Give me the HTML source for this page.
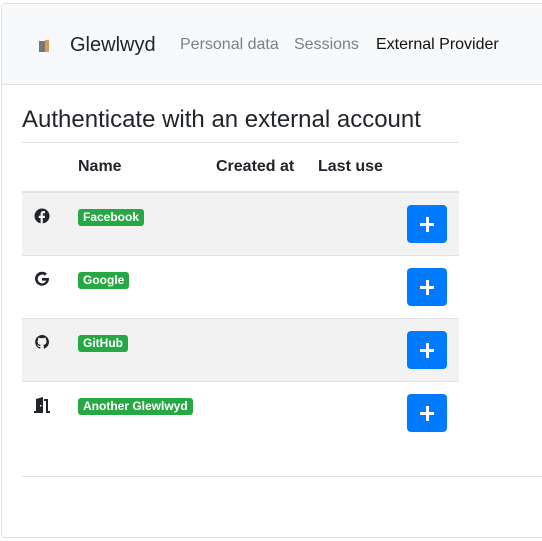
<!DOCTYPE html>
<html><head><style>
*{box-sizing:border-box;margin:0;padding:0}
body{width:542px;height:541px;background:#fff;font-family:"Liberation Sans",sans-serif;color:#212529;position:relative;overflow:hidden}
.frame{position:absolute;left:1px;top:3px;width:560px;height:535px;border:1px solid #dee2e6;border-radius:4px}
.nav{position:absolute;left:2px;top:4px;width:560px;height:81px;background:#f8f9fa;border-bottom:1px solid #dee2e6}
.abs{position:absolute;white-space:nowrap}
.brand{left:70px;top:34px;font-size:20px;color:#212529}
.nl{top:36px;font-size:16px;color:#7d7f82}
h1{position:absolute;left:22px;top:106px;font-size:24px;font-weight:400;white-space:nowrap}
.hl{position:absolute;left:22px;height:1px;background:#dee2e6}
.th{top:158px;font-size:16px;font-weight:bold}
.row{position:absolute;left:22px;width:437px;height:63px;border-bottom:1px solid #dee2e6}
.g{background:#f2f2f2}
.badge{position:absolute;left:56px;top:16px;height:17px;background:#28a745;color:#fff;font-size:12px;font-weight:bold;padding:2px 5px;border-radius:3px;line-height:13px}
.btn{position:absolute;left:385px;top:12px;width:40px;height:38px;background:#007bff;border-radius:4px}
.btn:before{content:"";position:absolute;left:13px;top:18px;width:14px;height:3px;background:#fff}
.btn:after{content:"";position:absolute;left:18.5px;top:12px;width:3px;height:15px;background:#fff}
.ic{position:absolute;left:12px;top:15px}
</style></head><body>
<div class="frame"></div>
<div class="nav"></div>
<div class="abs" style="left:39px;top:41px;width:6px;height:11px;background:#777"></div>
<div class="abs" style="left:45px;top:40px;width:4px;height:12px;background:#d4a050"></div>
<div class="abs brand">Glewlwyd</div>
<div class="abs nl" style="left:180px">Personal data</div>
<div class="abs nl" style="left:294px">Sessions</div>
<div class="abs nl" style="left:376px;color:#111">External Provider</div>
<h1>Authenticate with an external account</h1>
<div class="hl" style="top:142px;width:437px"></div>
<div class="abs th" style="left:78px">Name</div>
<div class="abs th" style="left:216px">Created at</div>
<div class="abs th" style="left:318px">Last use</div>
<div class="hl" style="top:191px;width:437px;height:2px"></div>
<div class="row g" style="top:193px"><svg class="ic" width="16" height="16" viewBox="0 0 16 16"><circle cx="8" cy="8" r="7.5" fill="#212529"/><path d="M8.8 16V10h2l.3-2.3H8.8V6.3c0-.6.2-1 1-1h1.3V3.2C10.6 3.1 10 3 9.4 3 7.8 3 6.6 4 6.6 5.8v1.9H4.7V10h1.9v6z" fill="#f2f2f2"/></svg><span class="badge">Facebook</span><div class="btn"></div></div>
<div class="row" style="top:256px"><svg class="ic" width="16" height="16" viewBox="0 0 16 16"><path d="M15 7H8v2.6h4.2A4.4 4.4 0 1 1 11 4.6l1.9-1.9A7 7 0 1 0 15 8z" fill="#212529"/></svg><span class="badge">Google</span><div class="btn"></div></div>
<div class="row g" style="top:319px"><svg class="ic" width="16" height="16" viewBox="0 0 16 16"><path d="M8 1a7 7 0 0 0-2.2 13.6c.4 0 .5-.2.5-.4v-1.3c-2 .4-2.4-.9-2.4-.9-.3-.8-.8-1-.8-1-.6-.4.1-.4.1-.4.7 0 1.1.7 1.1.7.6 1.1 1.7.8 2.1.6 0-.5.2-.8.4-1-1.5-.2-3.2-.8-3.2-3.5 0-.8.3-1.4.7-1.9 0-.2-.3-.9.1-1.9 0 0 .6-.2 1.9.7a6.6 6.6 0 0 1 3.5 0c1.3-.9 1.9-.7 1.9-.7.4 1 .1 1.7.1 1.9.4.5.7 1.1.7 1.9 0 2.7-1.7 3.3-3.2 3.5.3.2.5.7.5 1.3v2c0 .2.1.5.5.4A7 7 0 0 0 8 1z" fill="#212529"/></svg><span class="badge">GitHub</span><div class="btn"></div></div>
<div class="row" style="top:382px;border-bottom:none"><svg class="ic" width="20" height="16" viewBox="0 0 20 16"><path d="M0 16V14h2V2l7-2v16zM10 2h4v12h2v2h-4V4h-2z" fill="#212529"/><rect x="6" y="8" width="1.5" height="1.5" fill="#fff"/></svg><span class="badge">Another Glewlwyd</span><div class="btn"></div></div>
<div class="hl" style="top:476px;width:520px"></div>
</body></html>
